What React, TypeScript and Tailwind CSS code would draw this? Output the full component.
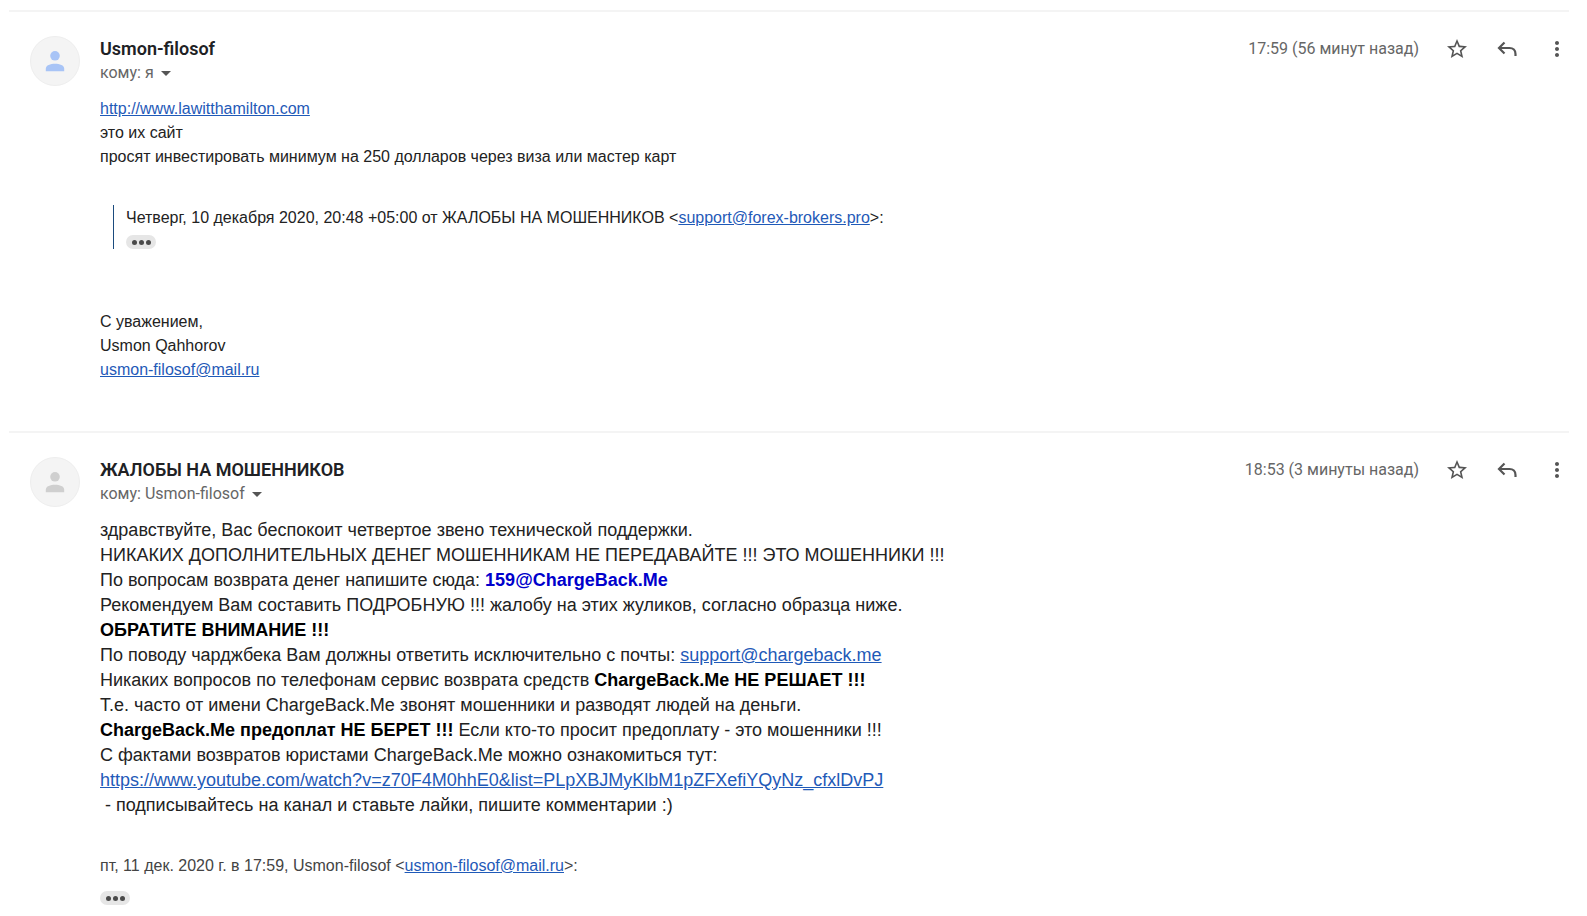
import type { ReactNode } from "react";
import { MdArrowDropDown, MdMoreVert, MdStarBorder } from "react-icons/md";

function Avatar({ className }: { className: string }) {
  return (
    <div className="flex items-center justify-center w-[50px] h-[50px] shrink-0 rounded-full bg-[#f4f4f4] border border-[#eeeeee]">
      <svg viewBox="0 0 20 22" className={`w-5 h-[22px] ${className}`} fill="currentColor" aria-hidden="true">
        <circle cx="10" cy="5.8" r="4.8" />
        <path d="M0.8 21.3v-2.6c0-3.6 4.6-5 9.2-5s9.2 1.4 9.2 5v2.6z" />
      </svg>
    </div>
  );
}

function ReplyIcon() {
  return (
    <svg viewBox="0 0 24 24" className="w-6 h-6 text-[#555]" fill="none" stroke="currentColor" strokeWidth="2.2" aria-hidden="true">
      <path d="M9.5 5.5 4 11l5.5 5.5" />
      <path d="M4 11h10.5c3.6 0 6 2.4 6 6v2" />
    </svg>
  );
}

function MailLink({ href, children }: { href: string; children: ReactNode }) {
  return (
    <a href={href} className="text-[#1f5ab8] underline">
      {children}
    </a>
  );
}

function TrimmedContent() {
  return (
    <button
      type="button"
      aria-label="Показать скрытый текст"
      className="flex items-center justify-center gap-[2px] w-[30px] h-[14px] rounded-full bg-[#e6e6e6]"
    >
      <span className="w-[5px] h-[5px] rounded-full bg-[#4a4a4a]" />
      <span className="w-[5px] h-[5px] rounded-full bg-[#4a4a4a]" />
      <span className="w-[5px] h-[5px] rounded-full bg-[#4a4a4a]" />
    </button>
  );
}

type MessageProps = {
  sender: string;
  recipient: string;
  time: string;
  avatarClass: string;
  children: ReactNode;
};

function Message({ sender, recipient, time, avatarClass, children }: MessageProps) {
  return (
    <article className="flex gap-5 border-t-2 border-[#f4f4f4] pt-6 pl-[21px]">
      <Avatar className={avatarClass} />
      <div className="flex-1 min-w-0 pt-px">
        <header className="flex items-start justify-between font-['Roboto',sans-serif] text-[#666]">
          <div>
            <h2 className="text-lg leading-6 font-semibold text-[#202124]">{sender}</h2>
            <button type="button" className="flex items-center text-base leading-6">
              кому: {recipient}
              <MdArrowDropDown className="w-6 h-6 text-[#555]" />
            </button>
          </div>
          <div className="flex items-center h-6">
            <time className="text-base leading-6">{time}</time>
            <button type="button" aria-label="Пометить" className="ml-[26px]">
              <MdStarBorder className="w-6 h-6 text-[#555]" />
            </button>
            <button type="button" aria-label="Ответить" className="ml-[26px]">
              <ReplyIcon />
            </button>
            <button type="button" aria-label="Ещё" className="ml-[26px]">
              <MdMoreVert className="w-6 h-6 text-[#555]" />
            </button>
          </div>
        </header>
        {children}
      </div>
    </article>
  );
}

export default function App() {
  return (
    <main className="min-h-screen bg-white pt-[10px] pl-[9px] pr-[18px] font-['Liberation_Sans',Arial,sans-serif] text-[#222]">
      <Message
        sender="Usmon-filosof"
        recipient="я"
        time="17:59 (56 минут назад)"
        avatarClass="text-[#a8c4f6]"
      >
        <div className="pt-3 pb-[49px] text-base leading-6">
          <p>
            <MailLink href="http://www.lawitthamilton.com">http://www.lawitthamilton.com</MailLink>
          </p>
          <p>это их сайт</p>
          <p>просят инвестировать минимум на 250 долларов через виза или мастер карт</p>
          <blockquote className="mt-9 ml-[13px] border-l border-[#1b4b7e] pl-3">
            <p className="pt-px">
              Четверг, 10 декабря 2020, 20:48 +05:00 от ЖАЛОБЫ НА МОШЕННИКОВ &lt;
              <MailLink href="mailto:support@forex-brokers.pro">support@forex-brokers.pro</MailLink>&gt;:
            </p>
            <div className="pt-[5px]">
              <TrimmedContent />
            </div>
          </blockquote>
          <p className="mt-[61px]">С уважением,</p>
          <p>Usmon Qahhorov</p>
          <p>
            <MailLink href="mailto:usmon-filosof@mail.ru">usmon-filosof@mail.ru</MailLink>
          </p>
        </div>
      </Message>

      <Message
        sender="ЖАЛОБЫ НА МОШЕННИКОВ"
        recipient="Usmon-filosof"
        time="18:53 (3 минуты назад)"
        avatarClass="text-[#cfcfcf]"
      >
        <div className="pt-3 text-lg leading-[25px]">
          <p>здравствуйте, Вас беспокоит четвертое звено технической поддержки.</p>
          <p>НИКАКИХ ДОПОЛНИТЕЛЬНЫХ ДЕНЕГ МОШЕННИКАМ НЕ ПЕРЕДАВАЙТЕ !!! ЭТО МОШЕННИКИ !!!</p>
          <p>
            По вопросам возврата денег напишите сюда: <b className="text-[#0000cc]">159@ChargeBack.Me</b>
          </p>
          <p>Рекомендуем Вам составить ПОДРОБНУЮ !!! жалобу на этих жуликов, согласно образца ниже.</p>
          <p>
            <b className="text-black">ОБРАТИТЕ ВНИМАНИЕ !!!</b>
          </p>
          <p>
            По поводу чарджбека Вам должны ответить исключительно с почты:{" "}
            <MailLink href="mailto:support@chargeback.me">support@chargeback.me</MailLink>
          </p>
          <p>
            Никаких вопросов по телефонам сервис возврата средств{" "}
            <b className="text-black">ChargeBack.Me НЕ РЕШАЕТ !!!</b>
          </p>
          <p>Т.е. часто от имени ChargeBack.Me звонят мошенники и разводят людей на деньги.</p>
          <p>
            <b className="text-black">ChargeBack.Me предоплат НЕ БЕРЕТ !!!</b> Если кто-то просит предоплату - это
            мошенники !!!
          </p>
          <p>С фактами возвратов юристами ChargeBack.Me можно ознакомиться тут:</p>
          <p>
            <MailLink href="https://www.youtube.com/watch?v=z70F4M0hhE0&list=PLpXBJMyKlbM1pZFXefiYQyNz_cfxlDvPJ">
              https://www.youtube.com/watch?v=z70F4M0hhE0&amp;list=PLpXBJMyKlbM1pZFXefiYQyNz_cfxlDvPJ
            </MailLink>
          </p>
          <p>&nbsp;- подписывайтесь на канал и ставьте лайки, пишите комментарии :)</p>
        </div>
        <p className="mt-9 text-base leading-6 text-[#444]">
          пт, 11 дек. 2020 г. в 17:59, Usmon-filosof &lt;
          <MailLink href="mailto:usmon-filosof@mail.ru">usmon-filosof@mail.ru</MailLink>&gt;:
        </p>
        <div className="pt-[13px]">
          <TrimmedContent />
        </div>
      </Message>
    </main>
  );
}
